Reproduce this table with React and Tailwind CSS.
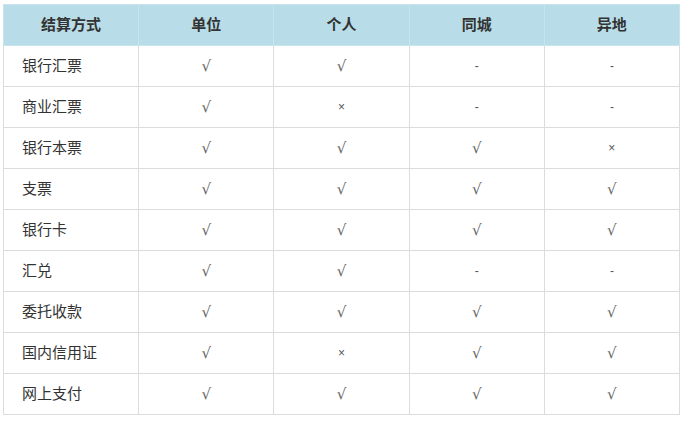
const cols = ['结算方式', '单位', '个人', '同城', '异地']

const rows = [
  ['银行汇票', '√', '√', '-', '-'],
  ['商业汇票', '√', '×', '-', '-'],
  ['银行本票', '√', '√', '√', '×'],
  ['支票', '√', '√', '√', '√'],
  ['银行卡', '√', '√', '√', '√'],
  ['汇兑', '√', '√', '-', '-'],
  ['委托收款', '√', '√', '√', '√'],
  ['国内信用证', '√', '×', '√', '√'],
  ['网上支付', '√', '√', '√', '√'],
]

export default function App() {
  return (
    <div className="w-[684px] h-[421px] bg-white pt-[4px] pl-[3px] font-['Liberation_Sans','Noto_Sans_CJK_SC',sans-serif] text-[#333]">
      <table className="w-[677px] border-collapse table-fixed">
        <thead>
          <tr className="h-[41px] bg-[#b8dde8]">
            {cols.map((c) => (
              <th
                key={c}
                className="border border-[#c9e4ec] text-[15px] font-bold text-center text-[#333]"
              >
                {c}
              </th>
            ))}
          </tr>
        </thead>
        <tbody>
          {rows.map((r) => (
            <tr key={r[0]} className="h-[41px]">
              {r.map((v, i) => (
                <td
                  key={i}
                  className={
                    i === 0
                      ? 'border border-[#dcdcdc] pl-[18px] text-[15px] text-left'
                      : v === '√'
                        ? 'border border-[#dcdcdc] text-center text-[15px] text-[#666] font-["DejaVu_Sans"]'
                        : 'border border-[#dcdcdc] text-center text-[12px] text-[#555]'
                  }
                >
                  {v}
                </td>
              ))}
            </tr>
          ))}
        </tbody>
      </table>
    </div>
  )
}
